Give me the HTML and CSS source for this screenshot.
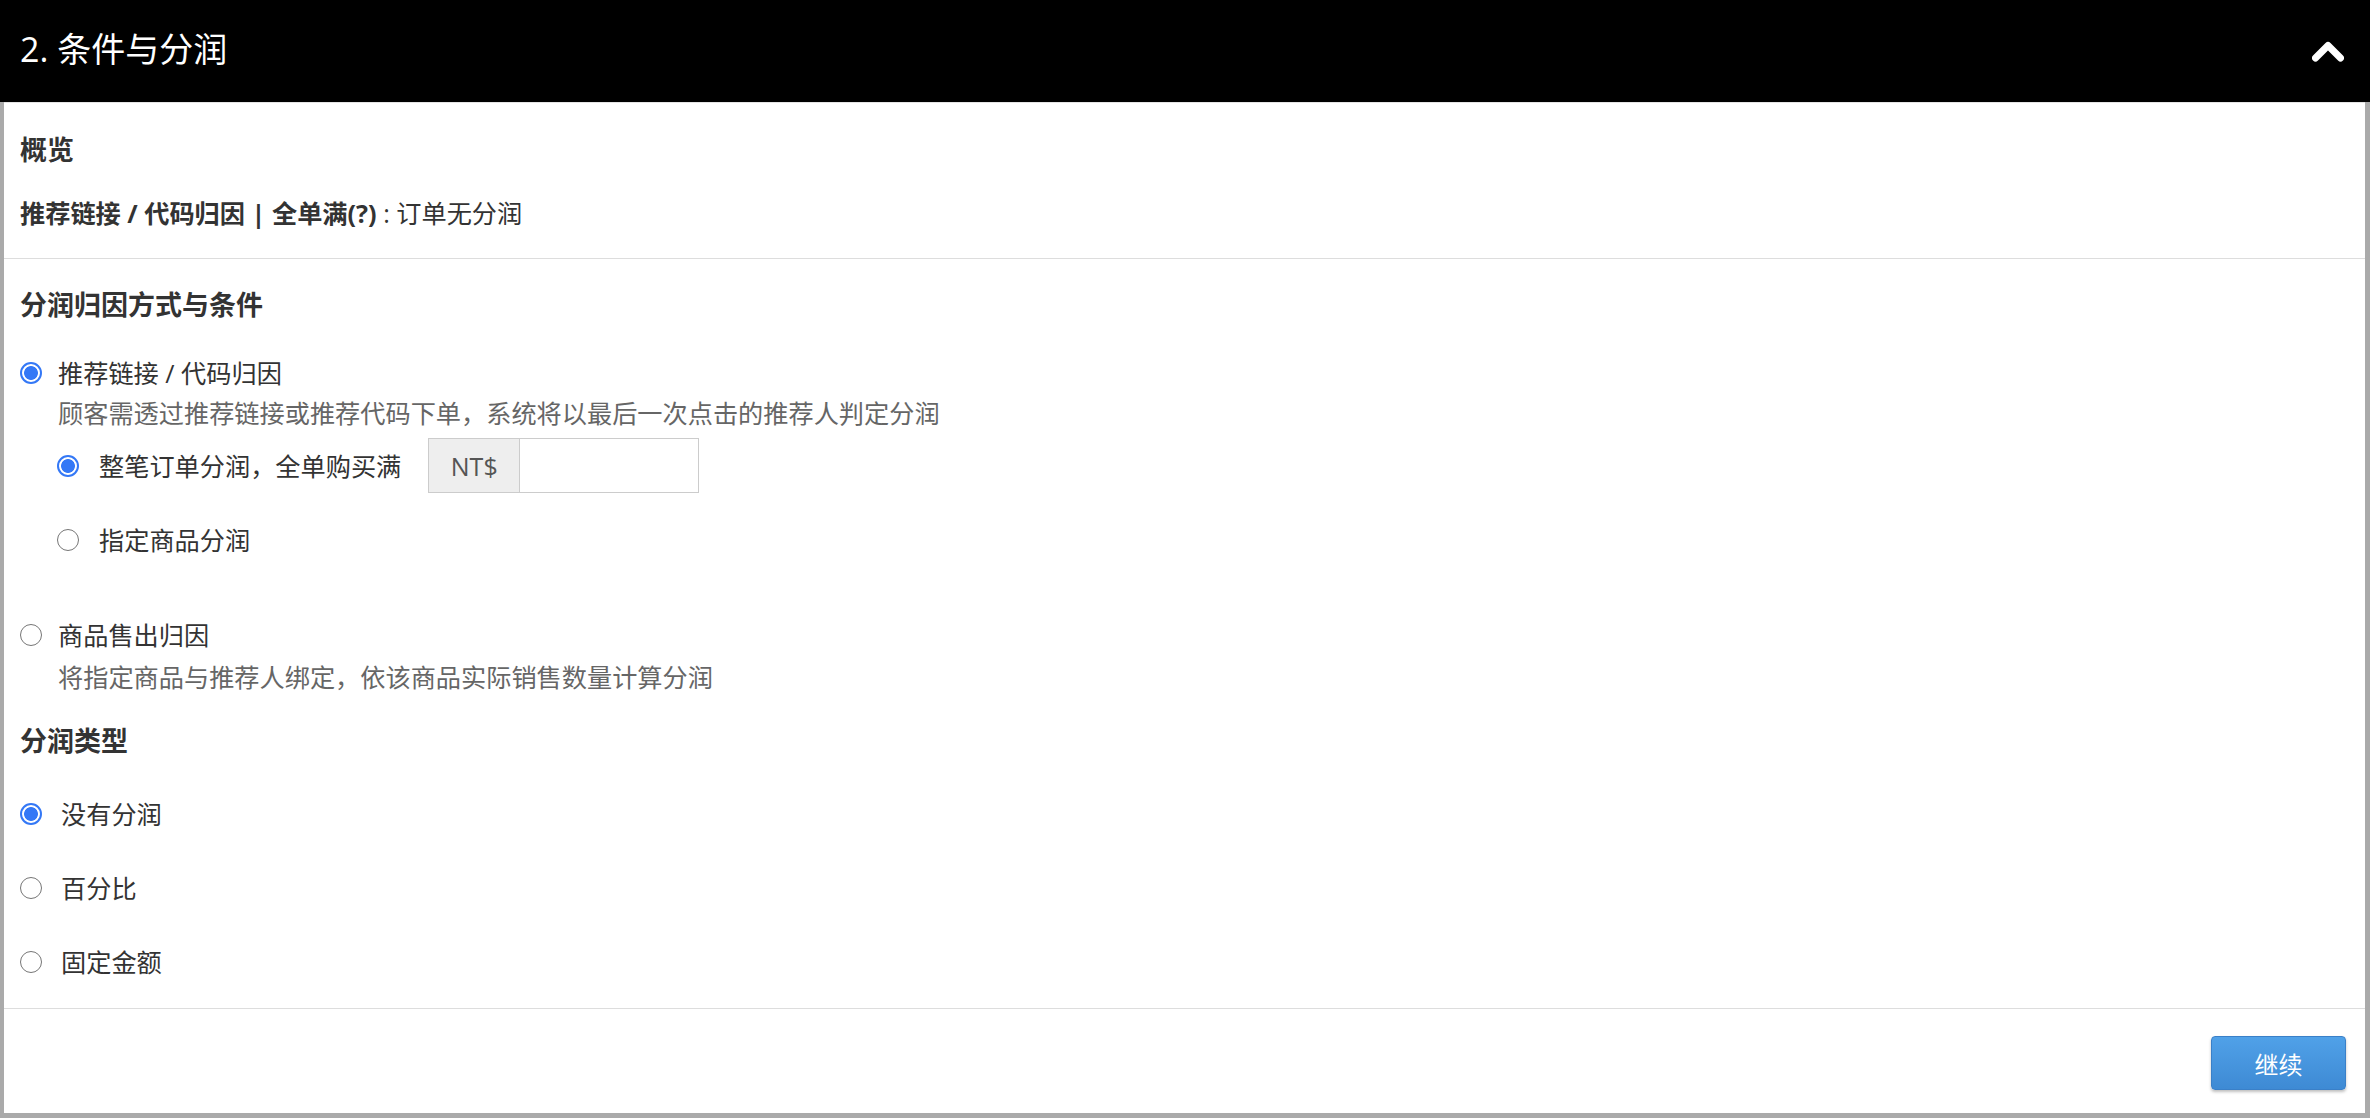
FILE: index.html
```html
<!DOCTYPE html>
<html lang="zh-CN">
<head>
    <meta charset="UTF-8" />
    <meta name="viewport" content="width=device-width, initial-scale=1" />
    <title>条件与分润</title>
    <link rel="stylesheet" href="styles.css">
</head>
<body>

    <div class="step-header">
        <h2>2. 条件与分润</h2>
        <svg class="toggle" width="32" height="22" viewBox="0 0 32 22">
            <polyline points="3.5,18 16,5.5 28.5,18" fill="none" stroke="#fff" stroke-width="7" stroke-linecap="round" stroke-linejoin="round" />
        </svg>
    </div>

    <div class="step-body">
        <div class="section overview">
            <h3>概览</h3>
            <p class="summary"><strong>推荐链接 / 代码归因 | 全单满(?)</strong> : 订单无分润</p>
        </div>

        <div class="section">
            <h3>分润归因方式与条件</h3>

            <div class="option first">
                <label class="choice main"><input type="radio" name="attribution" checked />推荐链接 / 代码归因</label>
                <p class="hint">顾客需透过推荐链接或推荐代码下单，系统将以最后一次点击的推荐人判定分润</p>
                <div class="sub-options">
                    <div class="sub-row">
                        <label class="choice"><input type="radio" name="scope" checked />整笔订单分润，全单购买满</label>
                        <div class="input-group">
                            <span class="addon">NT$</span>
                            <input type="text" name="threshold" />
                        </div>
                    </div>
                    <label class="choice second"><input type="radio" name="scope" />指定商品分润</label>
                </div>
            </div>

            <div class="option later">
                <label class="choice main"><input type="radio" name="attribution" />商品售出归因</label>
                <p class="hint">将指定商品与推荐人绑定，依该商品实际销售数量计算分润</p>
            </div>

            <h3 class="type-title">分润类型</h3>
            <div class="type-list">
                <label class="choice"><input type="radio" name="type" checked />没有分润</label>
                <label class="choice"><input type="radio" name="type" />百分比</label>
                <label class="choice"><input type="radio" name="type" />固定金额</label>
            </div>
        </div>

        <div class="step-footer">
            <button type="button" class="continue-button">继续</button>
        </div>
    </div>

</body>
</html>
```

FILE: styles.css
```css
* {
    box-sizing: border-box;
}
body {
    margin: 0;
    background-color: #aaa;
    font-family: "Open Sans", "Noto Sans CJK SC", sans-serif;
    font-size: 25.2px;
    line-height: 36px;
    color: #333;
}
.step-header {
    height: 102px;
    padding: 0 26px 0 20px;
    background-color: #000;
    display: flex;
    align-items: center;
    justify-content: space-between;
}
.step-header h2 {
    margin: 0 0 4px;
    font-size: 34px;
    font-weight: normal;
    line-height: 1;
    color: #fff;
}
.toggle {
    display: block;
}
.step-body {
    margin: 0 5px 5px 4px;
    background-color: #fff;
    border-top: 1px solid #e4e4e4;
}
.section {
    padding: 28px 16px;
    border-bottom: 1px solid #ddd;
}
.overview {
    padding: 29px 16px 27px;
}
h3 {
    margin: 0;
    font-size: 27px;
    font-weight: bold;
    color: #333;
}
.summary {
    margin: 27px 0 0;
}
.summary strong {
    color: #333;
}
.choice {
    display: flex;
    align-items: center;
    gap: 19px;
    height: 36px;
}
.choice.main {
    gap: 16px;
}
.option.first {
    margin-top: 32px;
}
.option.later {
    margin-top: 59px;
}
.hint {
    margin: 4px 0 0;
    padding-left: 38px;
    color: #666;
}
.option.later .hint {
    margin-top: 6px;
}
.sub-options {
    margin: 7px 0 0 37px;
}
.sub-row {
    display: flex;
    align-items: center;
    gap: 27px;
}
.sub-options .choice {
    gap: 20px;
}
.choice.second {
    margin-top: 29px;
}
.input-group {
    display: flex;
    height: 55px;
    border: 1px solid #ccc;
}
.addon {
    width: 91px;
    background-color: #eee;
    border-right: 1px solid #ccc;
    color: #555;
    font-size: 25px;
    display: flex;
    align-items: center;
    justify-content: center;
}
.input-group input {
    width: 178px;
    border: none;
    outline: none;
    padding: 0 12px;
    font: inherit;
}
.type-title {
    margin-top: 28px;
}
.type-list {
    margin-top: 37px;
    display: flex;
    flex-direction: column;
    gap: 38px;
}
input[type="radio"] {
    appearance: none;
    -webkit-appearance: none;
    flex: none;
    width: 22px;
    height: 22px;
    margin: 0;
    border: 1.5px solid #767676;
    border-radius: 50%;
    background-color: #fff;
}
input[type="radio"]:checked {
    border: 2px solid #3478f6;
    background: radial-gradient(circle, #3478f6 0, #3478f6 6.5px, #fff 7.3px);
}
.step-footer {
    padding: 27px 19px 23px;
    display: flex;
    justify-content: flex-end;
}
.continue-button {
    width: 135px;
    height: 54px;
    border: 1px solid #3a80c8;
    border-radius: 4px;
    background: linear-gradient(#50a1e8, #3e8ad4);
    box-shadow: 0 2px 3px rgba(0,0,0,0.25);
    color: #fff;
    font-family: inherit;
    font-size: 24px;
    cursor: pointer;
}
```
